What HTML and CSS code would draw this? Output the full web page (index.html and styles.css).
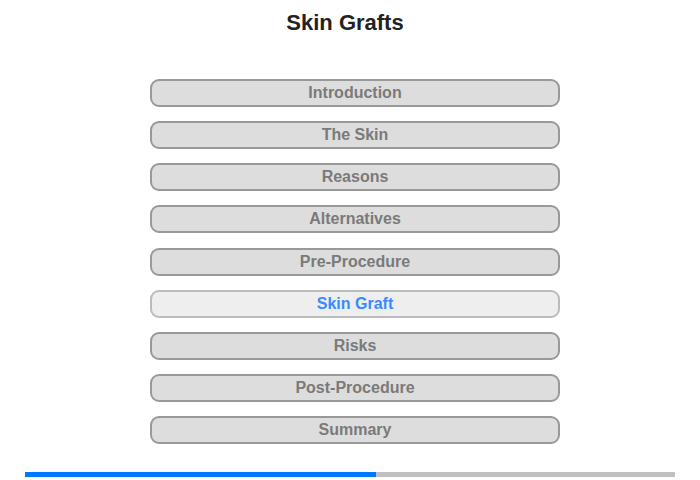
FILE: index.html
```html
<!DOCTYPE html>
<html>
<head>
<meta charset="utf-8">
<link rel="stylesheet" href="styles.css">
</head>
<body>
<div class="page">
  <h1 class="title">Skin Grafts</h1>
  <nav class="menu">
    <div class="item">Introduction</div>
    <div class="item">The Skin</div>
    <div class="item">Reasons</div>
    <div class="item">Alternatives</div>
    <div class="item">Pre-Procedure</div>
    <div class="item active">Skin Graft</div>
    <div class="item">Risks</div>
    <div class="item">Post-Procedure</div>
    <div class="item">Summary</div>
  </nav>
  <div class="progress"><div class="fill" style="width:54%"></div></div>
</div>
</body>
</html>
```
FILE: styles.css
```css
html, body { margin: 0; padding: 0; background: #fff; }
.page {
  width: 700px;
  height: 480px;
  font-family: "Liberation Sans", Arial, sans-serif;
  display: flex;
  flex-direction: column;
}
.title {
  margin: 10px 0 0 0;
  padding-right: 10px;
  font-size: 22px;
  line-height: 26px;
  font-weight: bold;
  color: #222;
  text-align: center;
}
.menu {
  margin: 43px 0 0 150px;
  width: 410px;
  display: flex;
  flex-direction: column;
  gap: 14.125px;
}
.item {
  box-sizing: border-box;
  height: 28px;
  border: 2px solid #999;
  border-radius: 9px;
  background: #ddd;
  color: #7a7a7a;
  font-size: 16px;
  font-weight: bold;
  line-height: 24px;
  text-align: center;
}
.item.active {
  background: #eee;
  border-color: #bbb;
  color: #3a8aff;
}
.progress {
  margin: 28px 0 0 25px;
  width: 650px;
  height: 5px;
  background: #c0c0c0;
  display: flex;
}
.fill { background: #0077ff; height: 100%; }
```
